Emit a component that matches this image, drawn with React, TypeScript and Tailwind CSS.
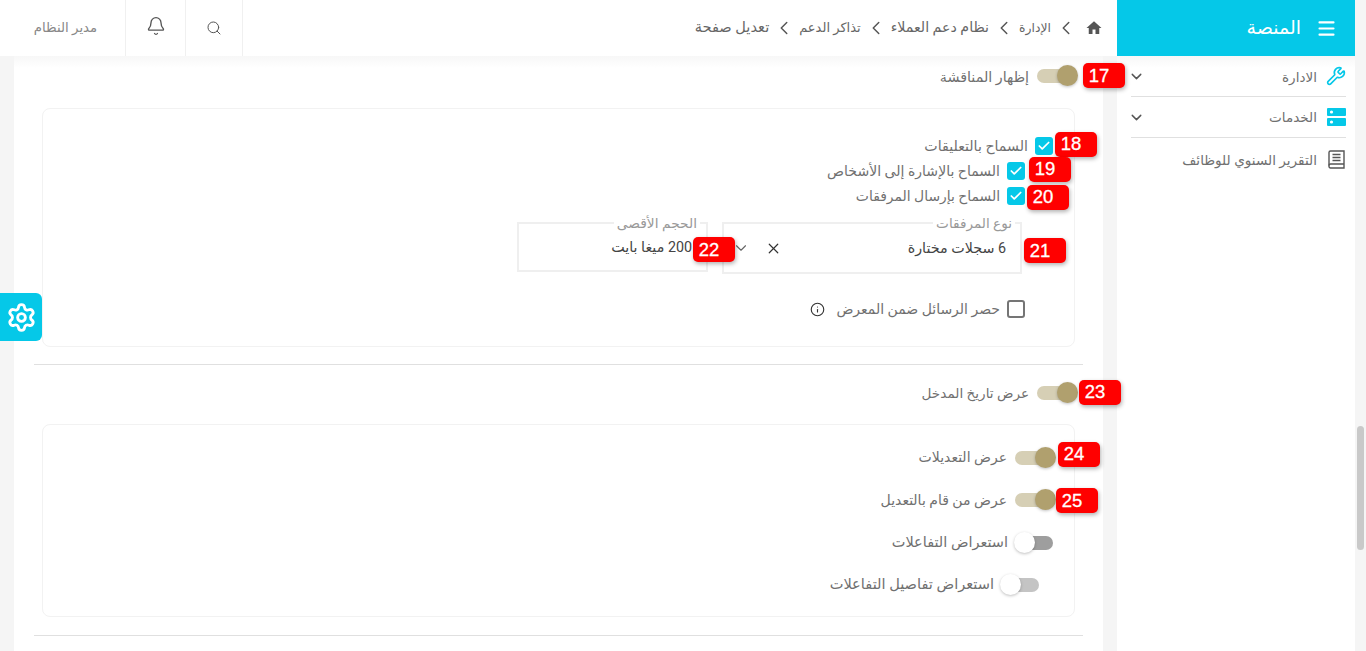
import React from "react";
import { Bell, Check, ChevronDown, ChevronLeft, Info, Menu, Search, Settings, Wrench, X } from "lucide-react";
import { MdHome } from "react-icons/md";

const Badge = ({ n, className }: { n: number; className: string }) => (
  <span className={`absolute z-10 flex h-[25px] w-[42px] items-center justify-center rounded-[5px] bg-[#ff0000] pr-[10px] font-['Liberation_Sans',sans-serif] text-[18.5px] text-white shadow-[1px_2px_4px_rgba(0,0,0,0.3)] [-webkit-text-stroke:0.3px_white] ${className}`}>
    {n}
  </span>
);

const Toggle = ({ on, light, children }: { on?: boolean; light?: boolean; children?: React.ReactNode }) => (
  <span className={`relative block h-[14px] w-[33px] shrink-0 rounded-full ${on ? "bg-[#d6cfb5]" : light ? "bg-[#c4c4c4]" : "bg-[#9e9e9e]"}`}>
    <span className={`absolute top-[-4px] h-[21px] w-[21px] rounded-full shadow-[0_1px_3px_rgba(0,0,0,0.25)] ${on ? "right-[-8px] bg-[#b0a06e]" : "left-[-6px] bg-white"}`} />
    {children}
  </span>
);

const Box = ({ on, children }: { on?: boolean; children?: React.ReactNode }) => (
  <span className={`relative flex h-[18px] w-[18px] shrink-0 items-center justify-center rounded-[3px] ${on ? "bg-[#05c8e8]" : "border-2 border-[#757575]"}`}>
    {on && <Check size={14} strokeWidth={3} className="text-white" />}
    {children}
  </span>
);

const Crumb = ({ children, className }: { children: string; className: string }) => (
  <>
    <ChevronLeft size={22} strokeWidth={1.6} className="mx-[4px] text-[#555]" />
    <span className={className}>{children}</span>
  </>
);

const NavRow = ({ icon, label, chevron, divider, labelClass }: { icon: React.ReactNode; label: string; chevron?: boolean; divider?: boolean; labelClass: string }) => (
  <div className={`flex h-[41px] items-center ${divider ? "border-b border-[#e0e0e0]" : ""}`}>
    <span className="flex w-[20px] shrink-0 items-center justify-center">{icon}</span>
    <span className={`mr-[9px] flex-1 text-[13.6px] text-[#707070] ${labelClass}`}>{label}</span>
    {chevron && <ChevronDown size={17} strokeWidth={2} className="ml-[-3px] text-[#555]" />}
  </div>
);

export default function App() {
  return (
    <div dir="rtl" className="flex h-[651px] w-full overflow-hidden bg-[#f5f5f5] font-['Roboto','DejaVu_Sans',sans-serif] text-[14.3px] text-[#707070]">
      <div className="flex w-[11px] shrink-0 flex-col pt-[426px]">
        <div className="mx-auto h-[124px] w-[7px] rounded-full bg-[#c9c9c9]" />
      </div>
      <div className="relative flex min-w-0 flex-1 flex-col">
        <header className="flex h-[56px] shrink-0 bg-white">
          <div className="flex w-[238px] shrink-0 items-center bg-[#05c8e8] pr-[18px] text-white">
            <Menu size={21} strokeWidth={2.4} />
            <span className="mr-[15px] text-[19px]">المنصة</span>
          </div>
          <nav className="flex flex-1 items-center text-[#666]">
            <MdHome size={18} className="ml-[4px] mr-[14px] text-[#555]" />
            <Crumb className="text-[12.4px]">الإدارة</Crumb>
            <Crumb className="text-[14.2px]">نظام دعم العملاء</Crumb>
            <Crumb className="text-[13px]">تذاكر الدعم</Crumb>
            <Crumb className="text-[14.6px]">تعديل صفحة</Crumb>
          </nav>
          <div className="flex h-full w-[243px] shrink-0">
            <div className="flex w-[58px] items-center justify-center border-x border-[#f0f0f0]"><Search size={16} strokeWidth={1.5} className="text-[#555]" /></div>
            <div className="flex w-[60px] items-center justify-center border-l border-[#f0f0f0] pb-[4px]"><Bell size={20} strokeWidth={1.6} className="text-[#555]" /></div>
            <div className="flex flex-1 items-center justify-center pl-[6px] text-[13.3px] text-[#888]">مدير النظام</div>
          </div>
        </header>

        <div className="flex min-h-0 flex-1">
          <aside className="w-[238px] shrink-0 bg-white bg-gradient-to-b from-[#f7f7f7] to-white to-[12px] pl-[14px] pr-[9px]">
            <NavRow divider chevron labelClass="pt-[2px]" label="الادارة" icon={<Wrench size={22} strokeWidth={2} className="text-[#05c8e8]" />} />
            <NavRow divider chevron labelClass="pt-0" label="الخدمات" icon={
              <svg width="19" height="18" viewBox="0 0 19 18"><rect x="0" y="0" width="19" height="8" rx="1" fill="#05c8e8" /><rect x="0" y="10" width="19" height="8" rx="1" fill="#05c8e8" /><circle cx="4.5" cy="4" r="1.6" fill="#fff" /><circle cx="4.5" cy="14" r="1.6" fill="#fff" /></svg>
            } />
            <div className="pt-[1px]">
              <NavRow labelClass="pt-[2px]" label="التقرير السنوي للوظائف" icon={
                <svg width="17" height="19" viewBox="0 0 17 19" fill="none" stroke="#555" strokeWidth="1.4"><path d="M1 15.5V2.5A1.5 1.5 0 0 1 2.5 1H16v17H2.5A1.5 1.5 0 0 1 1 16.5z" /><path d="M1 15.5A1.5 1.5 0 0 1 2.5 14H16" /><path d="M4.5 4.5h8M4.5 7.5h8M4.5 10.5h8" /></svg>
              } />
            </div>
          </aside>

          <main className="mx-[14px] min-w-0 flex-1 bg-white bg-gradient-to-b from-[#f7f7f7] to-white to-[12px]">
            <div className="flex h-[40px] items-center gap-[8px] pr-[33px]">
              <Toggle on><Badge n={17} className="right-[-55px] top-[-6px]" /></Toggle>
              <span className="pt-[3px]">إظهار المناقشة</span>
            </div>

            <section className="mx-[28px] mt-[12px] h-[239px] rounded-[8px] border border-[#f2f2f2] pt-[24px]">
              <div className="flex h-[25px] items-center gap-[7px] pr-[21px]">
                <Box on><Badge n={18} className="right-[-44px] top-[-5px]" /></Box>
                <span className="pt-[2px] text-[14.2px]">السماح بالتعليقات</span>
              </div>
              <div className="flex h-[25px] items-center gap-[7px] pr-[49px]">
                <Box on><Badge n={19} className="right-[-46px] top-[-5px]" /></Box>
                <span className="pt-[2px] text-[14.05px]">السماح بالإشارة إلى الأشخاص</span>
              </div>
              <div className="flex h-[25px] items-center gap-[7px] pr-[49px]">
                <Box on><Badge n={20} className="right-[-44px] top-[-2px]" /></Box>
                <span className="pt-[2px] text-[13.9px]">السماح بإرسال المرفقات</span>
              </div>

              <div className="mt-[8px] flex items-start gap-[14px] pr-[52px]">
                <fieldset className="relative h-[58px] w-[300px] border-2 border-[#efefef]">
                  <legend className="mr-[5px] px-[3px] text-[13.6px] leading-[14px] text-[#999]">نوع المرفقات</legend>
                  <div className="flex h-[38px] items-center pl-[11px] pr-[14px] text-[#444]">
                    <span className="flex-1">6 سجلات مختارة</span>
                    <X size={17} strokeWidth={1.7} className="mb-[2px] ml-[15px] text-[#333]" />
                    <ChevronDown size={18} strokeWidth={1.5} className="mb-[2px] ml-[-3px] text-[#666]" />
                  </div>
                  <Badge n={21} className="right-[-46px] top-[8px]" />
                </fieldset>
                <fieldset className="relative h-[56px] w-[191px] border-2 border-[#efefef]">
                  <legend className="mr-[6px] px-[3px] text-[13.8px] leading-[14px] text-[#999]">الحجم الأقصى</legend>
                  <div className="flex h-[36px] items-center pr-[14px] text-[#444]">200 ميغا بايت</div>
                  <Badge n={22} className="right-[-29px] top-[7px]" />
                </fieldset>
              </div>

              <div className="mt-[23px] flex h-[24px] items-center gap-[7px] pr-[49px]">
                <Box />
                <span className="text-[14px]">حصر الرسائل ضمن المعرض</span>
                <Info size={15} strokeWidth={1.8} className="mr-[4px] text-[#333]" />
              </div>
            </section>

            <div className="mx-[20px] mt-[17px] border-t border-[#e0e0e0]" />

            <div className="flex h-[55px] items-center gap-[8px] pr-[33px]">
              <Toggle on><Badge n={23} className="right-[-51px] top-[-6px]" /></Toggle>
              <span className="pt-[2px] text-[13.6px]">عرض تاريخ المدخل</span>
            </div>

            <section className="mx-[28px] mt-[4px] h-[193px] rounded-[8px] border border-[#f2f2f2] pt-[11px]">
              <div className="flex h-[43px] items-center gap-[8px] pr-[26px]">
                <Toggle on><Badge n={24} className="right-[-52px] top-[-9px]" /></Toggle>
                <span className="text-[14px]">عرض التعديلات</span>
              </div>
              <div className="flex h-[42px] items-center gap-[8px] pr-[26px]">
                <Toggle on><Badge n={25} className="right-[-50px] top-[-5px]" /></Toggle>
                <span className="text-[14px]">عرض من قام بالتعديل</span>
              </div>
              <div className="flex h-[43px] items-center gap-[12px] pr-[21px]">
                <Toggle />
                <span className="text-[14.5px]">استعراض التفاعلات</span>
              </div>
              <div className="flex h-[42px] items-center gap-[12px] pr-[35px]">
                <Toggle light />
                <span className="text-[14.6px]">استعراض تفاصيل التفاعلات</span>
              </div>
            </section>

            <div className="mx-[20px] mt-[18px] border-t border-[#e0e0e0]" />
          </main>
        </div>

        <button className="absolute left-0 top-[293px] flex h-[48px] w-[42px] items-center justify-center rounded-r-[6px] bg-[#05c8e8] text-white">
          <Settings size={31} strokeWidth={2.2} />
        </button>
      </div>
    </div>
  );
}
